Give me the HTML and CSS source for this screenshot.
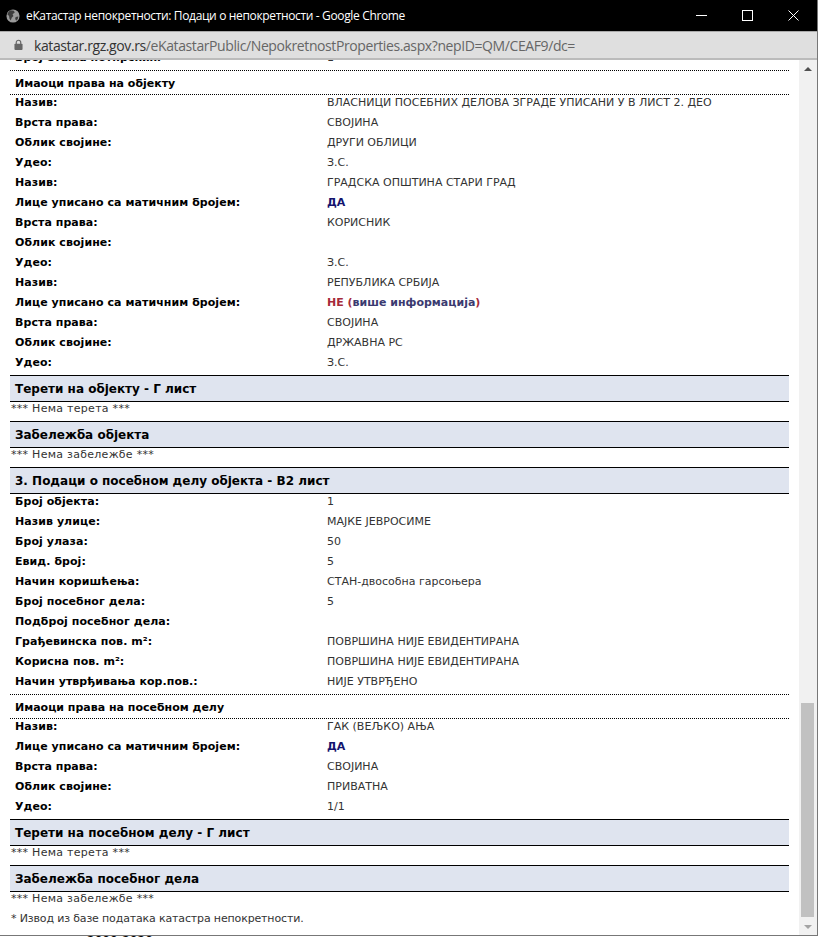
FILE: index.html
```html
<!DOCTYPE html>
<html lang="sr">
<head>
    <meta charset="UTF-8">
    <title>еКатастар непокретности: Подаци о непокретности - Google Chrome</title>
    <link rel="stylesheet" href="styles.css">
</head>
<body>

<div class="window">

    <!-- Chrome title bar -->
    <div class="titlebar">
        <svg class="globe" width="14" height="14" viewBox="0 0 16 16">
            <circle cx="8" cy="8" r="7.5" fill="#9a9a9a"/>
            <path d="M5 1.5 L9 2 L10 4 L7.5 6 L8.5 8 L6.5 10 L5.5 13 L4 11 L3.5 8 L1.5 6 L3 3 Z" fill="#3c3c3c"/>
            <path d="M11 9 L14 8.5 L13.5 11.5 L11.5 13.5 L10.5 11 Z" fill="#3c3c3c"/>
        </svg>
        <span class="title">еКатастар непокретности: Подаци о непокретности - Google Chrome</span>
        <div class="controls">
            <svg width="11" height="11" viewBox="0 0 11 11"><path d="M0 5.5 H11" stroke="#fff" fill="none"/></svg>
            <svg width="11" height="11" viewBox="0 0 11 11"><rect x="0.5" y="0.5" width="10" height="10" stroke="#fff" fill="none"/></svg>
            <svg width="11" height="11" viewBox="0 0 11 11"><path d="M0.5 0.5 L10.5 10.5 M10.5 0.5 L0.5 10.5" stroke="#fff" fill="none"/></svg>
        </div>
    </div>

    <!-- Address bar -->
    <div class="addressbar">
        <svg width="9" height="12" viewBox="0 0 10 12">
            <rect x="0.5" y="4.5" width="9" height="7" rx="1" fill="#666"/>
            <path d="M2.5 5 V3.2 a2.5 2.5 0 0 1 5 0 V5" stroke="#666" stroke-width="1.3" fill="none"/>
        </svg>
        <span class="url"><span class="host">katastar.rgz.gov.rs</span>/eKatastarPublic/NepokretnostProperties.aspx?nepID=QM/CEAF9/dc=</span>
    </div>

    <div class="viewport">
        <div class="page">
            <div class="sheet">

                <div class="rows rows-cut">
                    <div class="row"><b>Број етажа потпрских:</b><span>1</span></div>
                </div>

                <div class="subhead">Имаоци права на објекту</div>
                <div class="rows">
                    <div class="row"><b>Назив:</b><span>ВЛАСНИЦИ ПОСЕБНИХ ДЕЛОВА ЗГРАДЕ УПИСАНИ У В ЛИСТ 2. ДЕО</span></div>
                    <div class="row"><b>Врста права:</b><span>СВОЈИНА</span></div>
                    <div class="row"><b>Облик својине:</b><span>ДРУГИ ОБЛИЦИ</span></div>
                    <div class="row"><b>Удео:</b><span>З.С.</span></div>
                    <div class="row"><b>Назив:</b><span>ГРАДСКА ОПШТИНА СТАРИ ГРАД</span></div>
                    <div class="row"><b>Лице уписано са матичним бројем:</b><span class="yes">ДА</span></div>
                    <div class="row"><b>Врста права:</b><span>КОРИСНИК</span></div>
                    <div class="row"><b>Облик својине:</b><span></span></div>
                    <div class="row"><b>Удео:</b><span>З.С.</span></div>
                    <div class="row"><b>Назив:</b><span>РЕПУБЛИКА СРБИЈА</span></div>
                    <div class="row"><b>Лице уписано са матичним бројем:</b><span class="no">НЕ (<a href="#">више информација</a>)</span></div>
                    <div class="row"><b>Врста права:</b><span>СВОЈИНА</span></div>
                    <div class="row"><b>Облик својине:</b><span>ДРЖАВНА РС</span></div>
                    <div class="row"><b>Удео:</b><span>З.С.</span></div>
                </div>

                <h2>Терети на објекту - Г лист</h2>
                <p class="note">*** Нема терета ***</p>

                <h2>Забележба објекта</h2>
                <p class="note">*** Нема забележбе ***</p>

                <h2>3. Подаци о посебном делу објекта - В2 лист</h2>
                <div class="rows">
                    <div class="row"><b>Број објекта:</b><span>1</span></div>
                    <div class="row"><b>Назив улице:</b><span>МАЈКЕ ЈЕВРОСИМЕ</span></div>
                    <div class="row"><b>Број улаза:</b><span>50</span></div>
                    <div class="row"><b>Евид. број:</b><span>5</span></div>
                    <div class="row"><b>Начин коришћења:</b><span>СТАН-двособна гарсоњера</span></div>
                    <div class="row"><b>Број посебног дела:</b><span>5</span></div>
                    <div class="row"><b>Подброј посебног дела:</b><span></span></div>
                    <div class="row"><b>Грађевинска пов. m²:</b><span>ПОВРШИНА НИЈЕ ЕВИДЕНТИРАНА</span></div>
                    <div class="row"><b>Корисна пов. m²:</b><span>ПОВРШИНА НИЈЕ ЕВИДЕНТИРАНА</span></div>
                    <div class="row"><b>Начин утврђивања кор.пов.:</b><span>НИЈЕ УТВРЂЕНО</span></div>
                </div>

                <div class="subhead">Имаоци права на посебном делу</div>
                <div class="rows">
                    <div class="row"><b>Назив:</b><span>ГАК (ВЕЉКО) АЊА</span></div>
                    <div class="row"><b>Лице уписано са матичним бројем:</b><span class="yes">ДА</span></div>
                    <div class="row"><b>Врста права:</b><span>СВОЈИНА</span></div>
                    <div class="row"><b>Облик својине:</b><span>ПРИВАТНА</span></div>
                    <div class="row"><b>Удео:</b><span>1/1</span></div>
                </div>

                <h2>Терети на посебном делу - Г лист</h2>
                <p class="note">*** Нема терета ***</p>

                <h2>Забележба посебног дела</h2>
                <p class="note">*** Нема забележбе ***</p>
                <p class="footnote">* Извод из базе података катастра непокретности.</p>
            </div>

            <!-- Scrollbar -->
            <div class="scrollbar">
                <div class="arrow arrow-up"></div>
                <div class="track"><div class="thumb"></div></div>
                <div class="arrow arrow-down"></div>
            </div>
        </div>
    </div>
</div>

<div class="behind">2000-2020</div>

</body>
</html>
```

FILE: styles.css
```css
/* General styles */
html, body {
    margin: 0;
    padding: 0;
    height: 937px;
    overflow: hidden;
    background-color: #fff;
}
body {
    font-family: 'DejaVu Sans', Verdana, sans-serif;
    font-size: 11px;
    color: #333;
}

/* Window */
.window {
    width: 817px;
    height: 935px;
    border-right: 1px solid #777;
    border-bottom: 1px solid #777;
    display: flex;
    flex-direction: column;
}

/* Title bar */
.titlebar {
    height: 31px;
    background-color: #000;
    color: #fff;
    display: flex;
    align-items: center;
    padding-left: 6px;
    flex: none;
}
.title {
    font-family: 'Open Sans', sans-serif;
    font-size: 12px;
    letter-spacing: -0.35px;
    margin-left: 6px;
    white-space: nowrap;
}
.controls {
    margin-left: auto;
    display: flex;
    gap: 35px;
    padding-right: 18px;
}

/* Address bar */
.addressbar {
    height: 26px;
    background-color: #dfdfdf;
    border-top: 1px solid #aaa;
    border-bottom: 2px solid #bbb;
    display: flex;
    align-items: center;
    padding-left: 14px;
    flex: none;
}
.url {
    font-family: 'Open Sans', sans-serif;
    font-size: 14px;
    letter-spacing: -0.4px;
    margin-left: 11px;
    color: #666;
    white-space: nowrap;
}
.host {
    color: #333;
}

/* Page viewport */
.viewport {
    flex: 1;
    overflow: hidden;
}
.page {
    display: flex;
    height: 100%;
}
.sheet {
    flex: 1;
    min-width: 0;
    margin: 0 10px;
    overflow: hidden;
}

/* Label and value rows */
.rows {
    margin-top: -2px;
    margin-bottom: 2px;
}
.rows-cut {
    margin-top: -12px;
}
.row {
    height: 20px;
    line-height: 20px;
    display: flex;
    padding-left: 5px;
}
.row b {
    width: 312px;
    flex: none;
    color: #000;
    letter-spacing: 0.06px;
}
.yes {
    font-weight: bold;
    color: #14146e;
}
.no {
    font-weight: bold;
    color: #a52a3a;
}
.no a {
    color: #3a3a70;
    text-decoration: none;
}

/* Sub headings between dotted lines */
.subhead {
    height: 23px;
    line-height: 25px;
    padding-left: 5px;
    font-weight: bold;
    color: #000;
    border-top: 1px dotted #000;
    border-bottom: 1px dotted #000;
}

/* Section headers */
h2 {
    margin: 0;
    height: 25px;
    line-height: 26px;
    padding-left: 5px;
    font-size: 12px;
    color: #000;
    background-color: #dfe4ef;
    border-top: 1px solid #000;
    border-bottom: 1px solid #000;
}
.note {
    margin: 0;
    height: 19px;
    line-height: 13px;
    padding-left: 1px;
    letter-spacing: 0.28px;
}
.footnote {
    margin: 0;
    line-height: 16px;
    padding-left: 1px;
    letter-spacing: -0.15px;
}

/* Scrollbar */
.scrollbar {
    width: 18px;
    flex: none;
    background-color: #f1f1f1;
    display: flex;
    flex-direction: column;
    align-items: center;
}
.arrow {
    height: 17px;
    width: 100%;
    flex: none;
    display: flex;
    align-items: center;
    justify-content: center;
}
.arrow::before {
    content: "";
    border-left: 4px solid transparent;
    border-right: 4px solid transparent;
}
.arrow-up::before {
    border-bottom: 4px solid #505050;
}
.arrow-down::before {
    border-top: 4px solid #a3a3a3;
}
.track {
    flex: 1;
    width: 100%;
    display: flex;
    flex-direction: column;
    justify-content: flex-end;
}
.thumb {
    height: 214px;
    margin: 0 3px 1px 2px;
    background-color: #c1c1c1;
}

/* Bit of the page behind the popup */
.behind {
    margin-left: 87px;
    font-weight: bold;
    color: #000;
    line-height: 10px;
    height: 0;
}
```
